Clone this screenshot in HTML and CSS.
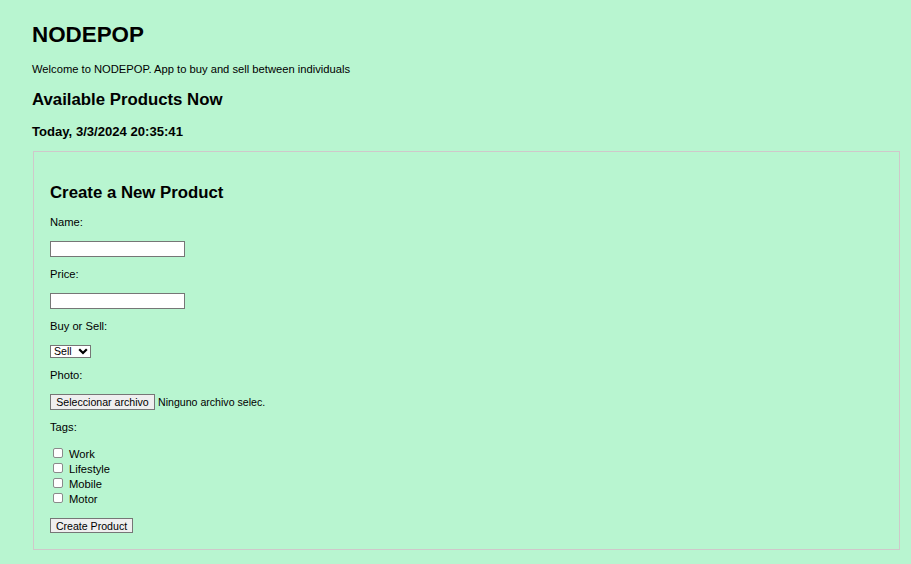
FILE: index.html
```html
<!DOCTYPE html>
<html lang="en">
<head>
<meta charset="utf-8">
<title>NODEPOP</title>
<link rel="stylesheet" href="styles.css">
</head>
<body>
  <h1 class="brand">NODEPOP</h1>
  <p class="intro">Welcome to NODEPOP. App to buy and sell between individuals</p>
  <h2 class="section-title">Available Products Now</h2>
  <h3 class="date">Today, 3/3/2024 20:35:41</h3>

  <div class="panel">
    <h2 class="panel-title">Create a New Product</h2>
    <form class="product-form">
      <label class="field-label" for="name">Name:</label>
      <input class="text-input" type="text" id="name">
      <label class="field-label" for="price">Price:</label>
      <input class="text-input" type="text" id="price">
      <label class="field-label" for="sale">Buy or Sell:</label>
      <div class="select-wrap">
        <select class="select" id="sale">
          <option>Sell</option>
          <option>Buy</option>
        </select>
        <svg class="chevron" width="10" height="7" viewBox="0 0 10 7"><path d="M1.2 1.2 L5 5 L8.8 1.2" fill="none" stroke="#000" stroke-width="2.2"/></svg>
      </div>
      <label class="field-label">Photo:</label>
      <div class="file-row">
        <span class="btn file-btn">Seleccionar archivo</span>
        <span class="file-name">Ninguno archivo selec.</span>
      </div>
      <label class="field-label">Tags:</label>
      <div class="tags">
        <label class="tag"><input class="check" type="checkbox"><span>Work</span></label>
        <label class="tag"><input class="check" type="checkbox"><span>Lifestyle</span></label>
        <label class="tag"><input class="check" type="checkbox"><span>Mobile</span></label>
        <label class="tag"><input class="check" type="checkbox"><span>Motor</span></label>
      </div>
      <button class="btn submit-btn" type="button">Create Product</button>
    </form>
  </div>
</body>
</html>
```

FILE: styles.css
```css
html, body {
  background: #b8f5d0;
}
body {
  margin: 0;
  padding: 22px 11px 20px 32px;
  font-family: "Liberation Sans", Arial, sans-serif;
  font-size: 11.2px;
  color: #000;
}
.brand {
  font-size: 22.4px;
  line-height: 26px;
  margin: 0 0 15px;
  font-weight: bold;
}
.intro {
  margin: 0 0 14px;
  line-height: 13px;
}
.section-title {
  font-size: 16.8px;
  line-height: 19px;
  margin: 0 0 15px;
}
.date {
  font-size: 13.1px;
  line-height: 15px;
  margin: 0 0 12px;
}
.panel {
  margin-left: 1px;
  border: 1px solid #cfc8ca;
  padding: 16px;
}
.panel-title {
  font-size: 16.8px;
  line-height: 19px;
  margin: 15px 0 14px;
}
.product-form {
  display: flex;
  flex-direction: column;
  align-items: flex-start;
  gap: 11.5px;
}
.field-label {
  line-height: 13px;
}
.text-input {
  box-sizing: border-box;
  width: 135px;
  height: 16px;
  margin: 0;
  padding: 0 2px;
  border: 1px solid #767676;
  background: #fff;
  font: inherit;
  font-size: 10.6px;
}
.select-wrap {
  position: relative;
}
.select {
  appearance: none;
  -webkit-appearance: none;
  box-sizing: border-box;
  width: 41px;
  height: 13px;
  margin: 0;
  padding: 0 0 0 3px;
  border: 1px solid #767676;
  border-radius: 0;
  background: #fff;
  font: inherit;
  font-size: 10.6px;
  line-height: 11px;
  color: #000;
}
.chevron {
  position: absolute;
  left: 28px;
  top: 3px;
  pointer-events: none;
}
.file-row {
  display: flex;
  align-items: center;
  gap: 3px;
  font-size: 10.6px;
}
.btn {
  box-sizing: border-box;
  display: inline-flex;
  align-items: center;
  justify-content: center;
  border: 1px solid #767676;
  background: #efefef;
  font: inherit;
  font-size: 10.6px;
  color: #000;
  margin: 0;
}
.file-btn {
  width: 105px;
  height: 16px;
}
.tags {
  display: flex;
  flex-direction: column;
  margin-top: 1px;
}
.tag {
  display: flex;
  align-items: center;
  height: 15px;
}
.check {
  appearance: none;
  -webkit-appearance: none;
  box-sizing: border-box;
  width: 10px;
  height: 10px;
  margin: 0 6px 2px 3px;
  border: 1px solid #8a8a8a;
  border-radius: 2px;
  background: #fff;
}
.submit-btn {
  width: 83px;
  height: 15px;
  padding: 0;
}
```
